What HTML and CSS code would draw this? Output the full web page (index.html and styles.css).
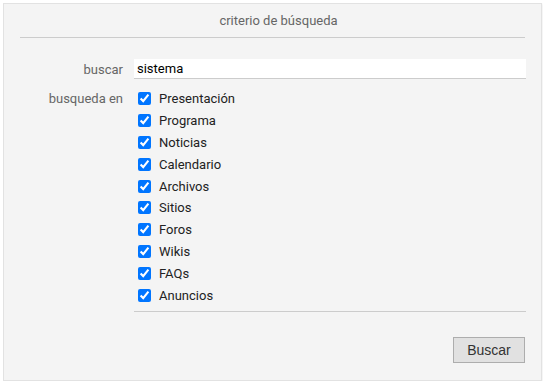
FILE: index.html
```html
<html>
  <head>
    <link rel="stylesheet" href="styles.css">
  </head>
  <body>
    <div class="panel">
      <div class="panel-title">criterio de búsqueda</div>
      <form class="search-form">
        <div class="form-row">
          <label class="form-label" for="query">buscar</label>
          <input class="text-input" type="text" id="query" value="sistema">
        </div>
        <div class="form-row">
          <div class="form-label label-top">busqueda en</div>
          <div class="options">
            <label class="option"><input type="checkbox" checked><span>Presentación</span></label>
            <label class="option"><input type="checkbox" checked><span>Programa</span></label>
            <label class="option"><input type="checkbox" checked><span>Noticias</span></label>
            <label class="option"><input type="checkbox" checked><span>Calendario</span></label>
            <label class="option"><input type="checkbox" checked><span>Archivos</span></label>
            <label class="option"><input type="checkbox" checked><span>Sitios</span></label>
            <label class="option"><input type="checkbox" checked><span>Foros</span></label>
            <label class="option"><input type="checkbox" checked><span>Wikis</span></label>
            <label class="option"><input type="checkbox" checked><span>FAQs</span></label>
            <label class="option"><input type="checkbox" checked><span>Anuncios</span></label>
          </div>
        </div>
        <div class="actions">
          <button type="submit" class="btn">Buscar</button>
        </div>
      </form>
    </div>
  </body>
</html>
```

FILE: styles.css
```css
* {
  box-sizing: border-box;
}

body {
  margin: 3px;
  background: #fff;
  font-family: Roboto, "Liberation Sans", Arial, sans-serif;
  font-size: 13px;
}

.panel {
  width: 539px;
  height: 378px;
  background: #f4f4f4;
  border: 1px solid #e2e2e2;
  box-shadow: 0 1px 2px rgba(0, 0, 0, 0.12);
}

.panel-title {
  margin: 0 16px;
  padding: 9px 0 9px 12px;
  line-height: 15px;
  text-align: center;
  color: #666;
  border-bottom: 1px solid #ccc;
}

.search-form {
  padding: 21px 15px 0 16px;
}

.form-row {
  display: grid;
  grid-template-columns: 103px 1fr;
  column-gap: 11px;
  align-items: center;
}

.form-row + .form-row {
  margin-top: 9px;
  align-items: start;
}

.form-label {
  text-align: right;
  color: #666;
}

.label-top {
  line-height: 22px;
}

.text-input {
  height: 20px;
  padding: 0 3px;
  border: none;
  border-bottom: 1px solid #ccc;
  background: #fff;
  font-family: Roboto, "Liberation Sans", Arial, sans-serif;
  font-size: 13px;
  color: #000;
  outline: none;
}

.options {
  padding-bottom: 5px;
  border-bottom: 1px solid #ccc;
}

.option {
  display: flex;
  align-items: center;
  height: 21.8px;
  color: #222;
}

.option input {
  margin: 0 8px 0 4px;
  width: 13px;
  height: 13px;
}

.actions {
  display: flex;
  justify-content: flex-end;
  margin-top: 25px;
  padding-right: 1px;
}

.btn {
  width: 72px;
  height: 26px;
  background: #e1e1e1;
  border: 1px solid #adadad;
  font-family: "Liberation Sans", Arial, sans-serif;
  font-size: 14px;
  color: #333;
}
```
